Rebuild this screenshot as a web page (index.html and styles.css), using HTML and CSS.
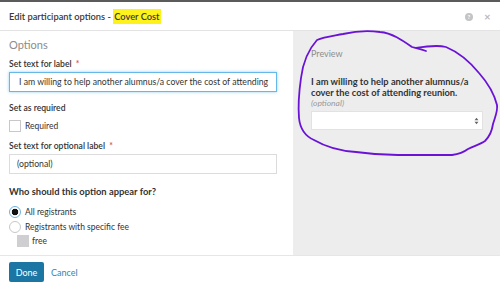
FILE: index.html
```html
<!DOCTYPE html>
<html lang="en">
<head>
    <meta charset="UTF-8">
    <title>Edit participant options</title>
    <link rel="stylesheet" href="styles.css">
</head>
<body>
    <div class="modal">
        <div class="header">
            <div class="title">Edit participant options - <span class="mark">Cover Cost</span></div>
            <div class="tools">
                <span class="help">?</span>
                <span class="close">&#x2715;</span>
            </div>
        </div>

        <div class="main">
            <div class="options">
                <div class="heading">Options</div>

                <label class="field-label">Set text for label <span class="req">*</span></label>
                <div class="input focused">I am willing to help another alumnus/a cover the cost of attending</div>

                <label class="field-label gap">Set as required</label>
                <div class="check-row">
                    <span class="box"></span>
                    <span>Required</span>
                </div>

                <label class="field-label gap2">Set text for optional label <span class="req">*</span></label>
                <div class="input">(optional)</div>

                <div class="question">Who should this option appear for?</div>
                <div class="radio-row first">
                    <span class="radio checked"></span>
                    <span>All registrants</span>
                </div>
                <div class="radio-row">
                    <span class="radio"></span>
                    <span>Registrants with specific fee</span>
                </div>
                <div class="check-row fee">
                    <span class="box disabled"></span>
                    <span>free</span>
                </div>
            </div>

            <div class="preview">
                <div class="preview-title">Preview</div>
                <div class="preview-label">I am willing to help another alumnus/a cover the cost of attending reunion.</div>
                <div class="preview-optional">(optional)</div>
                <div class="select">
                    <svg width="5" height="8" viewBox="0 0 5 8"><path d="M0.5 3.2 L2.5 0.8 L4.5 3.2 Z M0.5 4.8 L2.5 7.2 L4.5 4.8 Z" fill="#666"/></svg>
                </div>
            </div>
        </div>

        <div class="footer">
            <button class="done">Done</button>
            <a class="cancel" href="#">Cancel</a>
        </div>
    </div>

    <svg class="scribble" width="500" height="290" viewBox="0 0 500 290">
        <path d="M426 51 C421 49 416 48 412 47 C402 40 392 33 380 32 C366 30 356 31 343 34 C333 36 324 37 317 40 C308 50 303 62 301 78 C299 92 298 106 299 118 C300 128 305 136 314 140 C326 147 340 151 356 152 C370 154 382 155 398 155 L452 155 C459 154 464 152 468 149 C474 146 481 144 485 141 C489 137 492 131 493 124 C495 117 498 111 497 105 C494 93 487 82 479 73 C470 62 458 52 446 47 C438 45 428 46 416 48" fill="none" stroke="#6a12d6" stroke-width="1.8" stroke-linecap="round" stroke-linejoin="round"/>
    </svg>
</body>
</html>
```

FILE: styles.css
```css
body {
    margin: 0;
    font-family: Lato, "Open Sans", Arial, sans-serif;
    color: #333;
    background-color: #fff;
}
.modal {
    width: 500px;
    height: 290px;
    border-top: 2px solid #5b5b5b;
    box-sizing: border-box;
    display: flex;
    flex-direction: column;
}
.header {
    height: 29px;
    border-bottom: 1px solid #e3e3e3;
    display: flex;
    align-items: center;
    justify-content: space-between;
    padding: 0 9px;
    box-sizing: border-box;
}
.title {
    font-size: 9.3px;
    font-weight: 600;
    color: #3a3a3a;
}
.mark {
    background-color: #fdf21c;
    padding: 2px 1px;
}
.tools {
    display: flex;
    align-items: center;
    gap: 11px;
    padding-top: 2px;
}
.help {
    width: 8px;
    height: 8px;
    border-radius: 50%;
    background-color: #c4c4c4;
    color: #fff;
    font-size: 6px;
    font-weight: bold;
    line-height: 8px;
    text-align: center;
}
.close {
    font-size: 8px;
    color: #bdbdbd;
    font-weight: bold;
}
.main {
    display: flex;
    height: 224px;
}
.options {
    width: 293px;
    padding: 7px 16px 0 9px;
    box-sizing: border-box;
}
.heading {
    font-size: 11px;
    line-height: 14px;
    color: #8c8c8c;
    margin-bottom: 6px;
}
.field-label {
    display: block;
    font-size: 8.6px;
    line-height: 12px;
    font-weight: 600;
    color: #333;
    margin-bottom: 2px;
}
.field-label.gap {
    margin-top: 10px;
    margin-bottom: 6px;
}
.field-label.gap2 {
    margin-top: 8px;
}
.req {
    color: #d9534f;
    margin-left: 2px;
}
.input {
    height: 20px;
    border: 1px solid #dcdcdc;
    box-sizing: border-box;
    font-size: 8.7px;
    line-height: 18px;
    padding: 0 7px;
    white-space: nowrap;
    overflow: hidden;
}
.input.focused {
    border-color: #66b8e8;
    box-shadow: 0 0 3px rgba(102, 184, 232, 0.7);
    padding-left: 9px;
}
.check-row, .radio-row {
    display: flex;
    align-items: center;
    gap: 4px;
    height: 12px;
    font-size: 8.5px;
}
.box {
    width: 12px;
    height: 12px;
    border: 1px solid #c8c8c8;
    box-sizing: border-box;
    background-color: #fff;
}
.box.disabled {
    background-color: #cfcfd1;
    border-color: #cfcfd1;
}
.check-row.fee {
    margin-top: 2px;
    margin-left: 8px;
    gap: 3px;
}
.question {
    font-size: 9.4px;
    line-height: 14px;
    font-weight: bold;
    margin-top: 11px;
    margin-bottom: 7px;
}
.radio-row.first {
    margin-bottom: 3px;
}
.radio {
    width: 12px;
    height: 12px;
    border: 1px solid #c8c8c8;
    border-radius: 50%;
    box-sizing: border-box;
    background-color: #fff;
}
.radio.checked {
    border: 1px solid #6fb2df;
    background: radial-gradient(circle, #111 0, #111 3px, #fff 3.6px);
}
.preview {
    flex: 1;
    background-color: #ededed;
    padding: 17px 17px 0 18px;
    box-sizing: border-box;
}
.preview-title {
    font-size: 9px;
    line-height: 12px;
    color: #8d8d8d;
    margin-bottom: 17px;
}
.preview-label {
    font-size: 9.3px;
    line-height: 10.5px;
    font-weight: bold;
    color: #333;
}
.preview-optional {
    font-size: 8.5px;
    font-style: italic;
    color: #999;
    line-height: 11px;
}
.select {
    margin-top: 2px;
    width: 172px;
    height: 19px;
    background-color: #fff;
    border: 1px solid #e2e2e2;
    box-sizing: border-box;
    display: flex;
    align-items: center;
    justify-content: flex-end;
    padding-right: 3px;
}
.footer {
    border-top: 1px solid #e6e6e6;
    flex: 1;
    display: flex;
    align-items: center;
    gap: 7px;
    padding: 0 9px 2px;
}
.done {
    font-family: inherit;
    font-size: 9px;
    color: #fff;
    background-color: #1b76a3;
    border: none;
    border-radius: 2px;
    width: 35px;
    height: 20px;
    padding: 0;
}
.cancel {
    font-size: 9px;
    color: #2b88b8;
    text-decoration: none;
}
.scribble {
    position: absolute;
    top: 0;
    left: 0;
    pointer-events: none;
}
```
